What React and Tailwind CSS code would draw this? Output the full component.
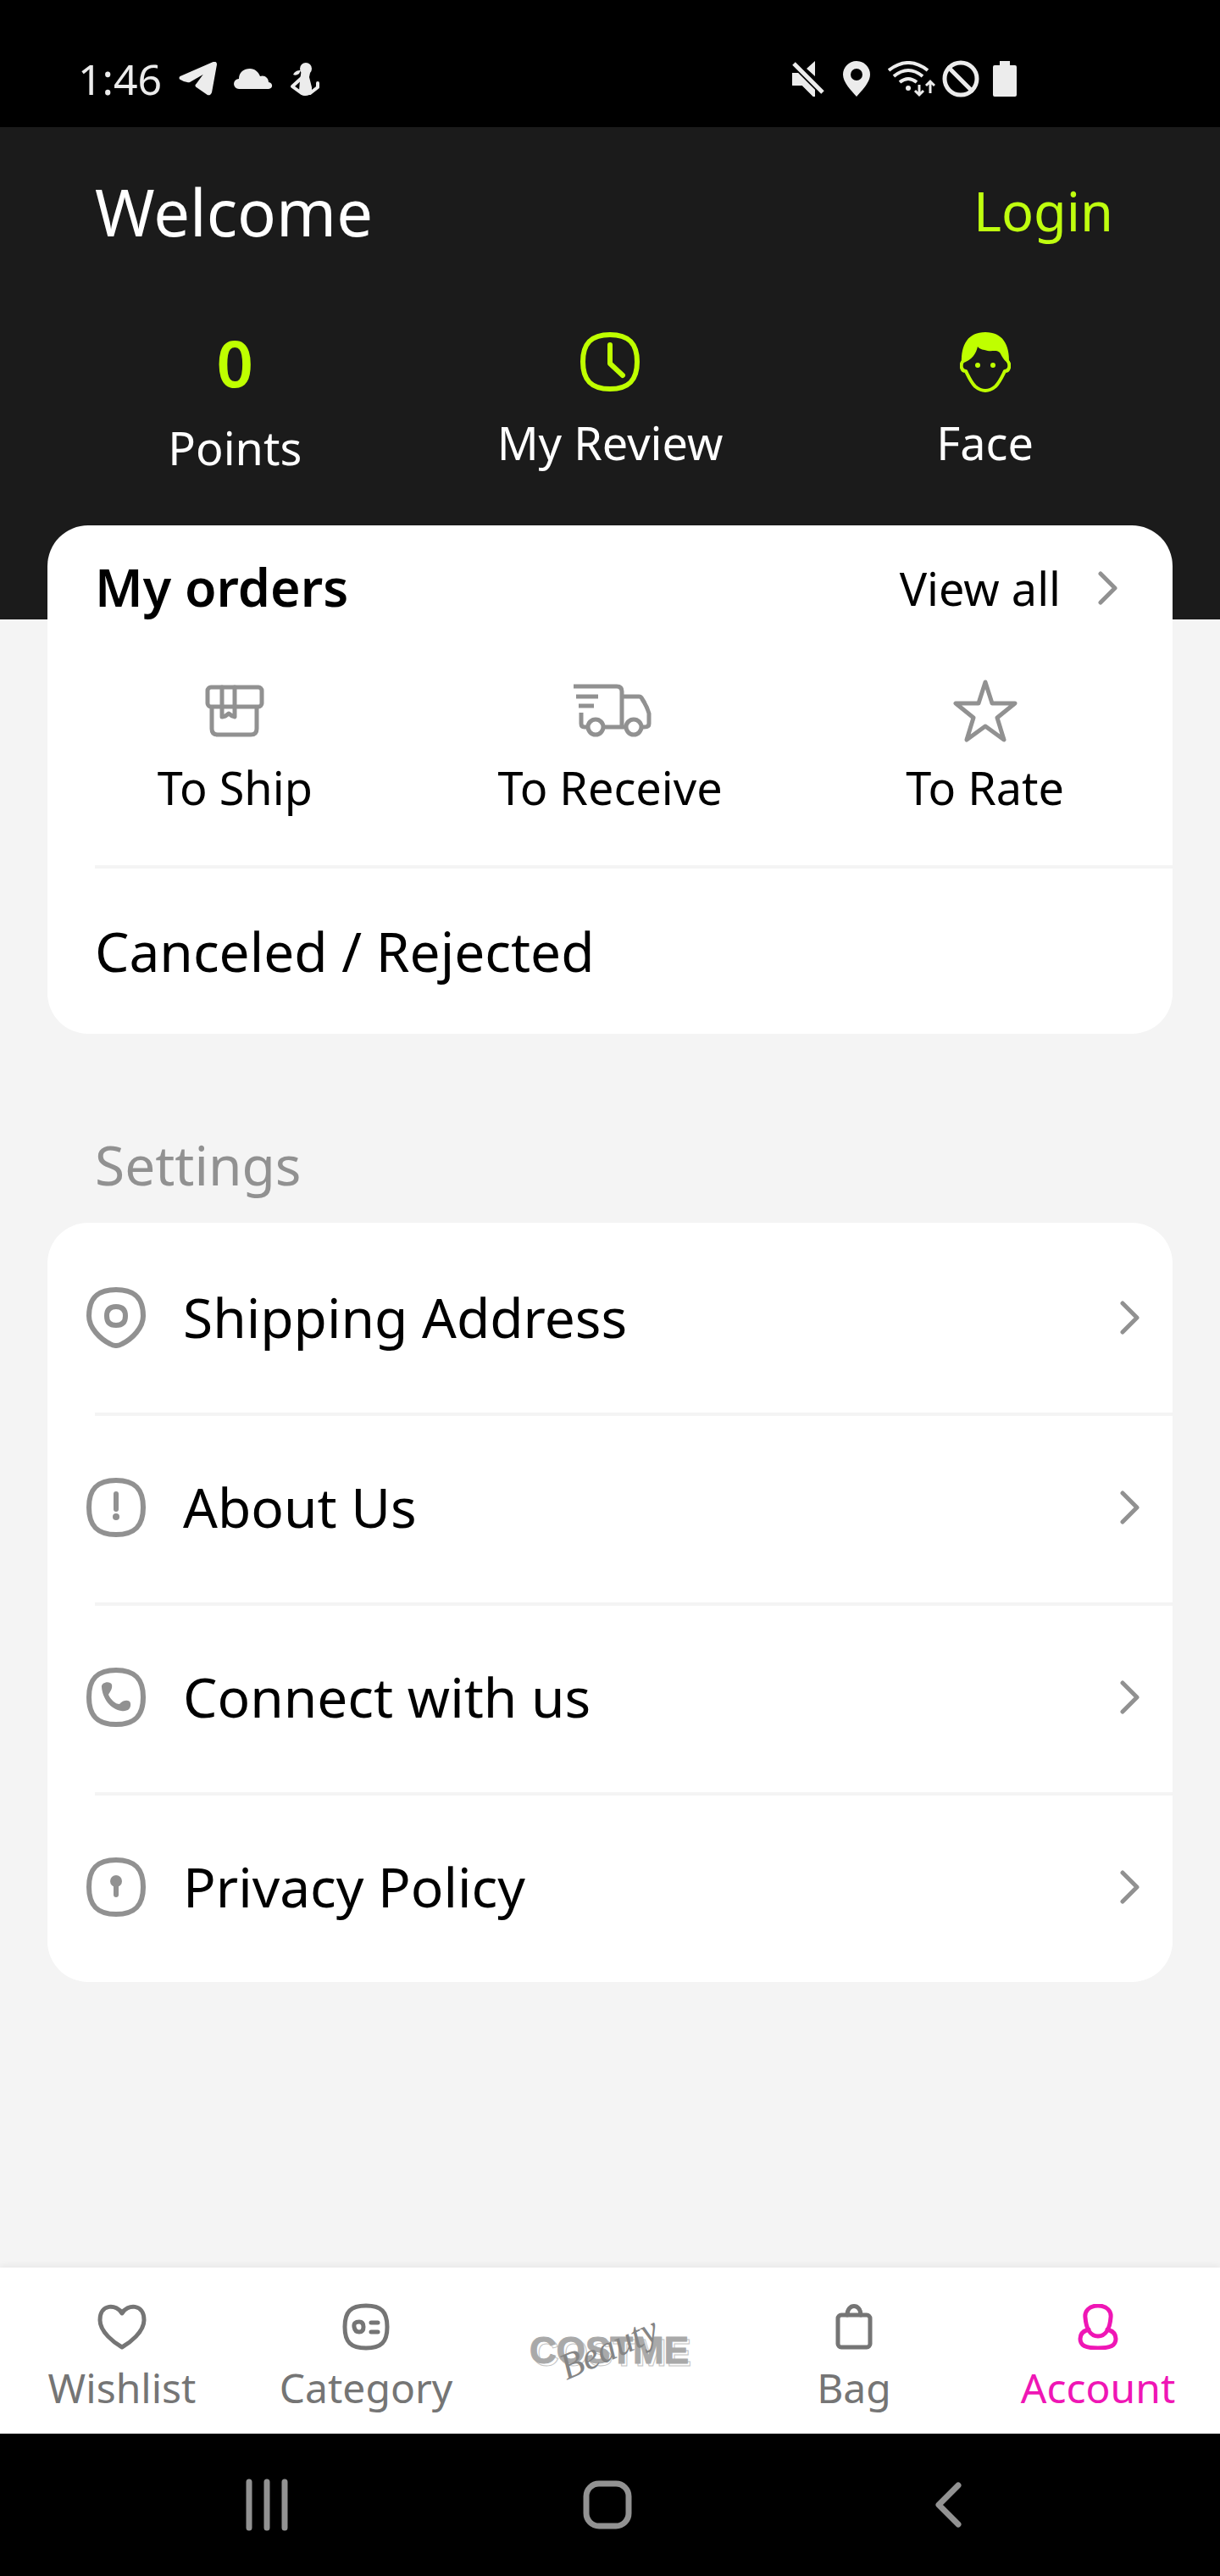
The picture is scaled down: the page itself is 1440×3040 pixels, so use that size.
import React from "react";

const squircle = "M35 3C57 3 67 13 67 35S57 67 35 67 3 57 3 35 13 3 35 3Z";

function Icon({ w, h, stroke = 6, className = "", children }) {
  return (
    <svg
      width={w}
      height={h}
      viewBox={`0 0 ${w} ${h}`}
      fill="none"
      stroke="currentColor"
      strokeWidth={stroke}
      strokeLinecap="round"
      strokeLinejoin="round"
      className={`shrink-0 ${className}`}
      aria-hidden="true"
    >
      {children}
    </svg>
  );
}

const Chevron = () => (
  <Icon w={24} h={40} stroke={5}>
    <path d="M3 3L20 20 3 37" />
  </Icon>
);

const TelegramIcon = () => (
  <Icon w={45} h={40} stroke={2}>
    <path fill="currentColor" d="M2 18L41 1q3-1 3 2L38 36q-1 3-4 2L21 29q-1-1 0-2L32 12 13 23Q8 24 2 20q-1-1 0-2Z" />
  </Icon>
);

const CloudIcon = () => (
  <Icon w={46} h={26} stroke={0}>
    <path fill="currentColor" d="M6 25A6 6 0 0 1 6 13C6 5 12 1 19 1c6 0 10 4 12 9 5-2 10 2 10 7 6 1 5 8 0 8Z" />
  </Icon>
);

const FigureIcon = () => (
  <Icon w={36} h={40} stroke={3}>
    <circle cx="19" cy="8" r="7" fill="currentColor" stroke="none" />
    <path fill="currentColor" stroke="none" d="M4 15C6 11 9 10 13 10L11 14Q7 17 4 15Z" />
    <path fill="currentColor" stroke="none" d="M14 8H25L23 18 26 30V36Q24 40 18 40T11 34L12 22Z" />
    <path d="M14 19L3 29 14 37" strokeWidth="4" />
    <path d="M24 37L33 30V25" strokeWidth="4" />
  </Icon>
);

const MuteIcon = () => (
  <Icon w={40} h={42} stroke={0}>
    <path fill="currentColor" d="M1 14H11L28 30V42H26L13 29H2Q1 29 1 28ZM28 0V18L18 9Z" />
    <path d="M3 3L37 37" stroke="#000" strokeWidth="9" strokeLinecap="butt" />
    <path fill="currentColor" d="M1 14H8L28 34V42H26L13 29H2Q1 29 1 28Z" />
    <path d="M3 3L37 37" strokeWidth="5" strokeLinecap="butt" />
  </Icon>
);

const LocationIcon = () => (
  <Icon w={34} h={42} stroke={0}>
    <path fill="currentColor" fillRule="evenodd" d="M17 0A16 16 0 0 1 33 16C33 25 24 34 17 42 10 34 1 25 1 16A16 16 0 0 1 17 0ZM17 9A7 7 0 1 0 17 23 7 7 0 1 0 17 9Z" />
  </Icon>
);

const WifiIcon = () => (
  <Icon w={56} h={43} stroke={4}>
    <path d="M1 11Q24-7 47 11M7 18Q24 4 41 18M14 25Q24 17 34 25" strokeLinecap="butt" />
    <circle cx="24" cy="32" r="3" fill="currentColor" stroke="none" />
    <path d="M37 28V39M32 35L37 40 42 35M50 38V25M45 29L50 24 55 29" strokeWidth="3" strokeLinecap="butt" strokeLinejoin="miter" />
  </Icon>
);

const BlockedIcon = () => (
  <Icon w={44} h={44} stroke={5}>
    <circle cx="22" cy="22" r="19" />
    <path d="M8 9L35 36" />
  </Icon>
);

const BatteryIcon = () => (
  <Icon w={28} h={42} stroke={0}>
    <path fill="currentColor" d="M8 0H20V5H26Q28 5 28 7V40Q28 42 26 42H2Q0 42 0 40V7Q0 5 2 5H8Z" />
  </Icon>
);

const ClockIcon = () => (
  <Icon w={70} h={70}>
    <path d={squircle} />
    <path d="M35 15V37L50 51" />
  </Icon>
);

const FaceIcon = () => (
  <Icon w={60} h={71} stroke={4}>
    <path fill="currentColor" stroke="none" d="M2 37C1 14 10 0 30 0S59 14 58 37C52 34 50 29 47 24 42 20 37 24 29 21Q23 20 21 17C19 25 15 33 2 37Z" />
    <path d="M3 35Q1 38 2 42T7 46C10 52 13 59 18 64Q24 69 30 69T42 64C47 59 50 52 53 46Q57 46 58 42T57 35" />
    <circle cx="21" cy="39" r="3" fill="currentColor" stroke="none" />
    <circle cx="39" cy="39" r="3" fill="currentColor" stroke="none" />
  </Icon>
);

const BoxIcon = () => (
  <Icon w={70} h={62} stroke={5}>
    <rect x="3" y="3" width="64" height="23" rx="4" />
    <path d="M8 27V52Q8 59 15 59H54Q61 59 61 52V27" />
    <path d="M20 3V38L24 37 28 34 32 37 35 38V3" />
  </Icon>
);

const TruckIcon = () => (
  <svg width="98" height="64" viewBox="-6 0 98 64" fill="none" stroke="currentColor" strokeWidth="5" strokeLinejoin="round" aria-hidden="true">
    <path d="M0 3H51Q57 3 57 9V51M3 15H29M6 26H24M9 34V47Q9 51 13 51H17M35 51H62M57 15H77Q80 15 81 18 87 27 89 35V47Q89 51 83 51H80" />
    <circle cx="26" cy="51" r="9" />
    <circle cx="71" cy="51" r="9" />
  </svg>
);

const StarIcon = () => (
  <Icon w={76} h={74} stroke={5}>
    <path d="M38 3L46 28H73L52 45 60 71 38 55 16 71 24 45 3 28H30Z" />
  </Icon>
);

const AddressIcon = () => (
  <Icon w={70} h={72}>
    <path d="M35 3C57 3 67 13 67 34 67 48 54 61 42 67Q35 71 28 67C16 61 3 48 3 34 3 13 13 3 35 3Z" />
    <path d="M35 23Q46 23 46 34T35 45 24 34 35 23Z" />
  </Icon>
);

const AboutIcon = () => (
  <Icon w={70} h={70}>
    <path d={squircle} />
    <path d="M35 19V37" />
    <circle cx="35" cy="46" r="4" fill="currentColor" stroke="none" />
  </Icon>
);

const ContactIcon = () => (
  <Icon w={70} h={70}>
    <path d={squircle} />
    <path fill="currentColor" stroke="none" d="M18 23C17 17 28 15 30 20 31 25 28 28 26 32 29 38 34 43 39 43 43 38 51 37 52 42 53 49 48 52 41 51 28 49 19 36 18 23Z" />
  </Icon>
);

const PrivacyIcon = () => (
  <Icon w={70} h={70}>
    <path d={squircle} />
    <circle cx="35" cy="28" r="7" fill="currentColor" stroke="none" />
    <path d="M35 30V44" />
  </Icon>
);

const HeartIcon = () => (
  <Icon w={58} h={54} stroke={5}>
    <path d="M29 11C23 0 3-1 3 19 3 33 20 46 29 51 38 46 55 33 55 19 55-1 35 0 29 11Z" />
  </Icon>
);

const CategoryIcon = () => (
  <Icon w={56} h={56} stroke={5}>
    <path d="M28 3C46 3 53 10 53 28S46 53 28 53 3 46 3 28 10 3 28 3Z" />
    <path d="M20 22Q25 22 25 28T20 34 14 28 20 22ZM34 23H42M34 34H42" />
  </Icon>
);

const BagIcon = () => (
  <Icon w={44} h={54} stroke={5}>
    <rect x="3" y="13" width="38" height="38" rx="4" />
    <path d="M14 13C14-1 30-1 30 13" />
  </Icon>
);

const AccountIcon = () => (
  <Icon w={48} h={54} stroke={5}>
    <path d="M24 2C35 2 40 9 39 16 38 29 33 38 24 38S10 29 9 16C8 9 13 2 24 2Z" />
    <path d="M13 30C6 32 3 36 3 41 3 49 9 52 24 52S45 49 45 41C45 36 42 32 35 30" />
  </Icon>
);

const Logo = () => (
  <svg width="208" height="110" viewBox="0 0 208 110" role="img" aria-label="Costme Beauty" className="shrink-0">
    <text x="106" y="73" textAnchor="middle" fill="none" stroke="#c4c4c4" strokeWidth="1" fontFamily="'Liberation Sans', sans-serif" fontWeight="700" fontSize="44">
      COSTME
    </text>
    <text x="103" y="70" textAnchor="middle" fill="#a9a9a9" stroke="#a9a9a9" strokeWidth="1" fontFamily="'Liberation Sans', sans-serif" fontWeight="700" fontSize="44">
      COSTME
    </text>
    <text x="104" y="66" textAnchor="middle" transform="rotate(-24 104 55)" fill="#858585" fontFamily="'Liberation Serif', serif" fontStyle="italic" fontSize="44">
      Beauty
    </text>
  </svg>
);

const stats = [
  { label: "My Review", icon: <ClockIcon /> },
  { label: "Face", icon: <FaceIcon /> },
];

const orders = [
  { label: "To Ship", icon: <BoxIcon /> },
  { label: "To Receive", icon: <TruckIcon /> },
  { label: "To Rate", icon: <StarIcon /> },
];

const settings = [
  { label: "Shipping Address", icon: <AddressIcon /> },
  { label: "About Us", icon: <AboutIcon /> },
  { label: "Connect with us", icon: <ContactIcon /> },
  { label: "Privacy Policy", icon: <PrivacyIcon /> },
];

function Tab({ label, icon, active }) {
  return (
    <a
      href="#"
      aria-current={active ? "page" : undefined}
      className={`flex flex-col items-center gap-[10px] pt-10 ${active ? "text-[#ef16b5]" : "text-[#757575]"}`}
    >
      <span className="flex h-[60px] items-center">{icon}</span>
      <span className="text-[48px] leading-[64px]">{label}</span>
    </a>
  );
}

export default function App() {
  return (
    <div className="flex min-h-screen flex-col bg-[#f4f4f4] font-['Noto_Sans',sans-serif] text-black">
      <div className="flex h-[150px] items-center justify-between bg-black pl-[92px] pr-[240px] pt-9 text-[#ececec]">
        <div className="flex items-center gap-5">
          <time className="text-[50px] leading-none">1:46</time>
          <TelegramIcon />
          <CloudIcon />
          <FigureIcon />
        </div>
        <div className="flex items-center gap-4">
          <MuteIcon />
          <span className="px-1"><LocationIcon /></span>
          <div className="flex items-center gap-2">
            <WifiIcon />
            <BlockedIcon />
          </div>
          <BatteryIcon />
        </div>
      </div>

      <header className="bg-[#1b1b1b] pb-[167px] text-white">
        <div className="flex h-[200px] items-center justify-between pl-28 pr-[126px]">
          <h1 className="text-[76px] leading-none">Welcome</h1>
          <a href="#" className="pb-1 text-[63px] leading-none text-[#bfff0f]">Login</a>
        </div>
        <div className="grid grid-cols-3 items-start px-14 pt-8 text-[54px] leading-[72px]">
          <a href="#" className="flex flex-col items-center gap-[18px]">
            <span className="flex h-[92px] items-center text-[76px] font-semibold text-[#bfff00]">0</span>
            Points
          </a>
          {stats.map((s) => (
            <a key={s.label} href="#" className="flex flex-col items-center gap-[14px]">
              <span className="flex h-[90px] items-center text-[#bfff00]">{s.icon}</span>
              {s.label}
            </a>
          ))}
        </div>
      </header>

      <main className="px-14 pb-16">
        <section className="relative mt-[-111px] rounded-[48px] bg-white">
          <div className="flex h-[144px] items-center justify-between pl-14 pr-16">
            <h2 className="text-[61px] font-semibold leading-none">My orders</h2>
            <a href="#" className="flex items-center gap-11 pt-1 text-[54px] leading-none">
              View all
              <span className="text-[#919191]"><Chevron /></span>
            </a>
          </div>
          <div className="grid grid-cols-3 pb-14 pt-[35px] text-[54px] leading-[72px]">
            {orders.map((o) => (
              <a key={o.label} href="#" className="flex flex-col items-center gap-[14px]">
                <span className="flex h-20 items-center text-[#919191]">{o.icon}</span>
                {o.label}
              </a>
            ))}
          </div>
          <div className="ml-14 h-1 bg-[#f4f4f4]" />
          <a href="#" className="flex h-[195px] items-center pl-14 text-[64px] leading-none">
            Canceled / Rejected
          </a>
        </section>

        <h2 className="mb-6 mt-[111px] pl-14 text-[64px] leading-[88px] text-[#919191]">Settings</h2>

        <ul className="rounded-[48px] bg-white">
          {settings.map((s, i) => (
            <li key={s.label} className="flex h-[224px] flex-col">
              {i > 0 && <div className="ml-14 h-1 bg-[#f4f4f4]" />}
              <button
                type="button"
                className={`flex w-full flex-1 items-center pl-[46px] pr-[38px] text-left text-[64px] leading-none ${i > 0 ? "pb-1" : ""}`}
              >
                <span className="text-[#919191]">{s.icon}</span>
                <span className="flex-1 pl-11">{s.label}</span>
                <span className="text-[#919191]"><Chevron /></span>
              </button>
            </li>
          ))}
        </ul>
      </main>

      <nav className="mt-auto grid h-[196px] grid-cols-5 bg-white shadow-[0_-2px_8px_rgba(0,0,0,0.06)]">
        <Tab label="Wishlist" icon={<HeartIcon />} />
        <Tab label="Category" icon={<CategoryIcon />} />
        <a href="#" className="flex items-center justify-center"><Logo /></a>
        <Tab label="Bag" icon={<BagIcon />} />
        <Tab label="Account" icon={<AccountIcon />} active />
      </nav>

      <div className="flex h-[168px] items-center justify-between bg-black pl-[290px] pr-[304px] text-[#929292]">
        <button type="button" aria-label="Recent apps">
          <Icon w={50} h={62} stroke={7}>
            <path d="M4 4V58M25 4V58M46 4V58" />
          </Icon>
        </button>
        <button type="button" aria-label="Home">
          <Icon w={58} h={58} stroke={7}>
            <rect x="4" y="4" width="50" height="50" rx="15" />
          </Icon>
        </button>
        <button type="button" aria-label="Back" className="pl-2">
          <Icon w={34} h={56} stroke={7}>
            <path d="M29 5L6 28 29 51" />
          </Icon>
        </button>
      </div>
    </div>
  );
}
